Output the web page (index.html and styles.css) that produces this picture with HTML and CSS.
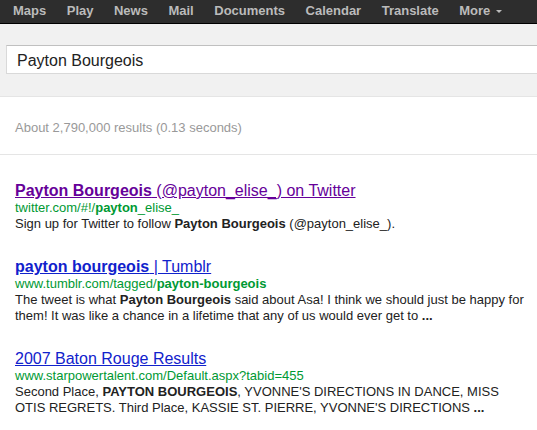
FILE: index.html
```html
<!DOCTYPE html>
<html>
<head>
<meta charset="utf-8">
<link rel="stylesheet" href="styles.css">
</head>
<body>
<div class="topbar">
  <a class="nav">Maps</a>
  <a class="nav">Play</a>
  <a class="nav">News</a>
  <a class="nav">Mail</a>
  <a class="nav">Documents</a>
  <a class="nav">Calendar</a>
  <a class="nav">Translate</a>
  <a class="nav more">More<span class="caret"></span></a>
</div>
<div class="searcharea">
  <div class="searchbox">Payton Bourgeois</div>
</div>
<div class="stats">About 2,790,000 results (0.13 seconds)</div>
<div class="results">
  <div class="result">
    <a class="title visited"><b>Payton Bourgeois</b> (@payton_elise_) on Twitter</a>
    <div class="url">twitter.com/#!/<b>payton</b>_elise_</div>
    <div class="snippet">Sign up for Twitter to follow <b>Payton Bourgeois</b> (@payton_elise_).</div>
  </div>
  <div class="result">
    <a class="title"><b>payton bourgeois</b> | Tumblr</a>
    <div class="url">www.tumblr.com/tagged/<b>payton-bourgeois</b></div>
    <div class="snippet">The tweet is what <b>Payton Bourgeois</b> said about Asa! I think we should just be happy for them! It was like a chance in a lifetime that any of us would ever get to <b>...</b></div>
  </div>
  <div class="result">
    <a class="title">2007 Baton Rouge Results</a>
    <div class="url">www.starpowertalent.com/Default.aspx?tabid=455</div>
    <div class="snippet">Second Place, <b>PAYTON BOURGEOIS</b>, YVONNE'S DIRECTIONS IN DANCE, MISS OTIS REGRETS. Third Place, KASSIE ST. PIERRE, YVONNE'S DIRECTIONS <b>...</b></div>
  </div>
</div>
</body>
</html>
```
FILE: styles.css
```css
html, body {
  margin: 0;
  padding: 0;
  background: #fff;
  font-family: "Liberation Sans", Arial, sans-serif;
  overflow: hidden;
}
.topbar {
  height: 23px;
  background: #2d2d2d;
  border-bottom: 1px solid #000;
  display: flex;
  align-items: flex-start;
  padding-left: 13px;
  gap: 20.5px;
  white-space: nowrap;
}
.nav {
  color: #bbb;
  font-weight: bold;
  font-size: 13px;
  line-height: 21px;
  display: flex;
  align-items: center;
}
.more .caret {
  display: inline-block;
  width: 0;
  height: 0;
  border-left: 3px solid transparent;
  border-right: 3px solid transparent;
  border-top: 3px solid #bbb;
  margin-left: 6px;
  margin-top: 1px;
}
.searcharea {
  background: #f1f1f1;
  height: 73px;
  border-bottom: 1px solid #e5e5e5;
  padding-top: 21px;
  box-sizing: border-box;
  padding-left: 6px;
}
.searchbox {
  background: #fff;
  height: 29px;
  border: 1px solid #d9d9d9;
  border-top-color: #c0c0c0;
  border-right: none;
  box-sizing: border-box;
  font-size: 16px;
  line-height: 24px;
  padding: 3px 0 0 10px;
  color: #222;
}
.stats {
  height: 58px;
  border-bottom: 1px solid #e5e5e5;
  box-sizing: border-box;
  color: #999;
  font-size: 13px;
  padding-left: 15px;
  padding-top: 23px;
  line-height: 16px;
}
.results {
  padding: 26px 0 0 15px;
}
.result {
  margin-bottom: 25px;
}
.title {
  display: block;
  font-size: 16px;
  line-height: 19px;
  color: #1122cc;
  text-decoration: underline;
}
.title.visited {
  color: #660099;
}
.url {
  color: #009933;
  font-size: 13px;
  line-height: 16px;
}
.snippet {
  color: #222;
  font-size: 13px;
  line-height: 16px;
  max-width: 514px;
}
```
